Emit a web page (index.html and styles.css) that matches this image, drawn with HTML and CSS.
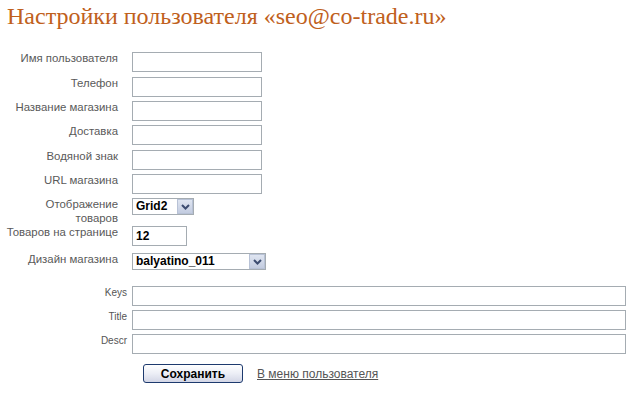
FILE: index.html
```html
<!DOCTYPE html>
<html lang="ru">
<head>
<meta charset="utf-8">
<title>Настройки пользователя</title>
<link rel="stylesheet" href="styles.css">
</head>
<body>
<h1 class="title">Настройки пользователя «seo@co-trade.ru»</h1>
<form class="settings">
  <div class="grid-main">
    <label class="lbl">Имя пользователя</label>
    <div class="ctl"><input class="txt" type="text"></div>
    <label class="lbl">Телефон</label>
    <div class="ctl"><input class="txt" type="text"></div>
    <label class="lbl">Название магазина</label>
    <div class="ctl"><input class="txt" type="text"></div>
    <label class="lbl">Доставка</label>
    <div class="ctl"><input class="txt" type="text"></div>
    <label class="lbl">Водяной знак</label>
    <div class="ctl"><input class="txt" type="text"></div>
    <label class="lbl">URL магазина</label>
    <div class="ctl"><input class="txt" type="text"></div>
    <label class="lbl lbl-two">Отображение<br>товаров</label>
    <div class="ctl">
      <span class="sel sel-small"><select class="sel-input"><option>Grid2</option></select><span class="sel-arrow"><svg width="9" height="6" viewBox="0 0 9 6"><path d="M1 1 L4.5 4.5 L8 1" fill="none" stroke="#3c4c70" stroke-width="2"/></svg></span></span>
    </div>
    <label class="lbl">Товаров на странице</label>
    <div class="ctl"><input class="txt txt-num" type="text" value="12"></div>
    <label class="lbl">Дизайн магазина</label>
    <div class="ctl">
      <span class="sel sel-wide"><select class="sel-input"><option>balyatino_011</option></select><span class="sel-arrow"><svg width="9" height="6" viewBox="0 0 9 6"><path d="M1 1 L4.5 4.5 L8 1" fill="none" stroke="#3c4c70" stroke-width="2"/></svg></span></span>
    </div>
  </div>
  <div class="grid-meta">
    <label class="lbl-sm">Keys</label>
    <input class="txt txt-full" type="text">
    <label class="lbl-sm">Title</label>
    <input class="txt txt-full" type="text">
    <label class="lbl-sm">Descr</label>
    <input class="txt txt-full" type="text">
  </div>
  <div class="actions">
    <button class="btn" type="button">Сохранить</button>
    <a class="link" href="#">В меню пользователя</a>
  </div>
</form>
</body>
</html>
```
FILE: styles.css
```css
html, body {
  margin: 0;
  padding: 0;
  background: #fff;
}
body {
  font-family: "Liberation Sans", Arial, sans-serif;
  color: #555;
}
.title {
  margin: 0;
  padding: 0 0 0 7px;
  font-family: "Liberation Serif", "Times New Roman", serif;
  font-weight: normal;
  font-size: 24px;
  line-height: 32px;
  color: #c0601c;
}
.settings {
  margin-top: 20px;
}
.grid-main {
  display: grid;
  grid-template-columns: 118px auto;
  grid-template-rows: 25px 24px 24px 25px 24px 24px 28px 27px 17px;
  column-gap: 14px;
  align-items: start;
  justify-content: start;
}
.lbl {
  text-align: right;
  font-size: 11.4px;
  line-height: 13px;
  color: #595959;
  white-space: nowrap;
}
.lbl-two {
  line-height: 14px;
  margin-top: -1px;
}
.ctl {
  display: flex;
}
.txt {
  box-sizing: border-box;
  width: 130px;
  height: 20px;
  margin: 0;
  padding: 1px 3px;
  border: 1px solid #a5acb2;
  background: #fff;
  font-family: "Liberation Sans", Arial, sans-serif;
  font-size: 12px;
  font-weight: bold;
  color: #000;
  outline: none;
}
.txt-num {
  width: 55px;
}
.sel {
  box-sizing: border-box;
  display: inline-flex;
  height: 17px;
  border: 1px solid #a5acb2;
  background: #fff;
}
.sel-small {
  width: 62px;
}
.sel-wide {
  width: 134px;
}
.sel-input {
  appearance: none;
  -webkit-appearance: none;
  flex: 1;
  min-width: 0;
  border: 0;
  margin: 0;
  padding: 0 0 0 3px;
  height: 15px;
  background: transparent;
  font-family: "Liberation Sans", Arial, sans-serif;
  font-size: 12px;
  font-weight: bold;
  line-height: 15px;
  color: #000;
  outline: none;
}
.sel-arrow {
  box-sizing: border-box;
  width: 16px;
  height: 15px;
  display: flex;
  align-items: center;
  justify-content: center;
  background: linear-gradient(#dfe5f1, #c3cce0);
  border: 1px solid #b8c2d6;
}
.grid-meta {
  display: grid;
  grid-template-columns: 127px 494px;
  grid-auto-rows: 20px;
  column-gap: 5px;
  row-gap: 4px;
  margin-top: 16px;
}
.lbl-sm {
  text-align: right;
  font-size: 10px;
  line-height: 12px;
  padding-top: 1px;
  color: #555;
}
.txt-full {
  width: 494px;
}
.actions {
  display: flex;
  align-items: center;
  gap: 14px;
  margin-top: 10px;
  padding-left: 143px;
}
.btn {
  box-sizing: border-box;
  width: 100px;
  height: 19px;
  margin: 0;
  padding: 0;
  border: 1px solid #1d3a6e;
  border-radius: 3px;
  background: linear-gradient(#ffffff, #eceef6 50%, #d3d6e6);
  font-family: "Liberation Sans", Arial, sans-serif;
  font-size: 12px;
  font-weight: bold;
  color: #000;
}
.link {
  font-size: 12px;
  color: #555;
  text-decoration: underline;
}
```
